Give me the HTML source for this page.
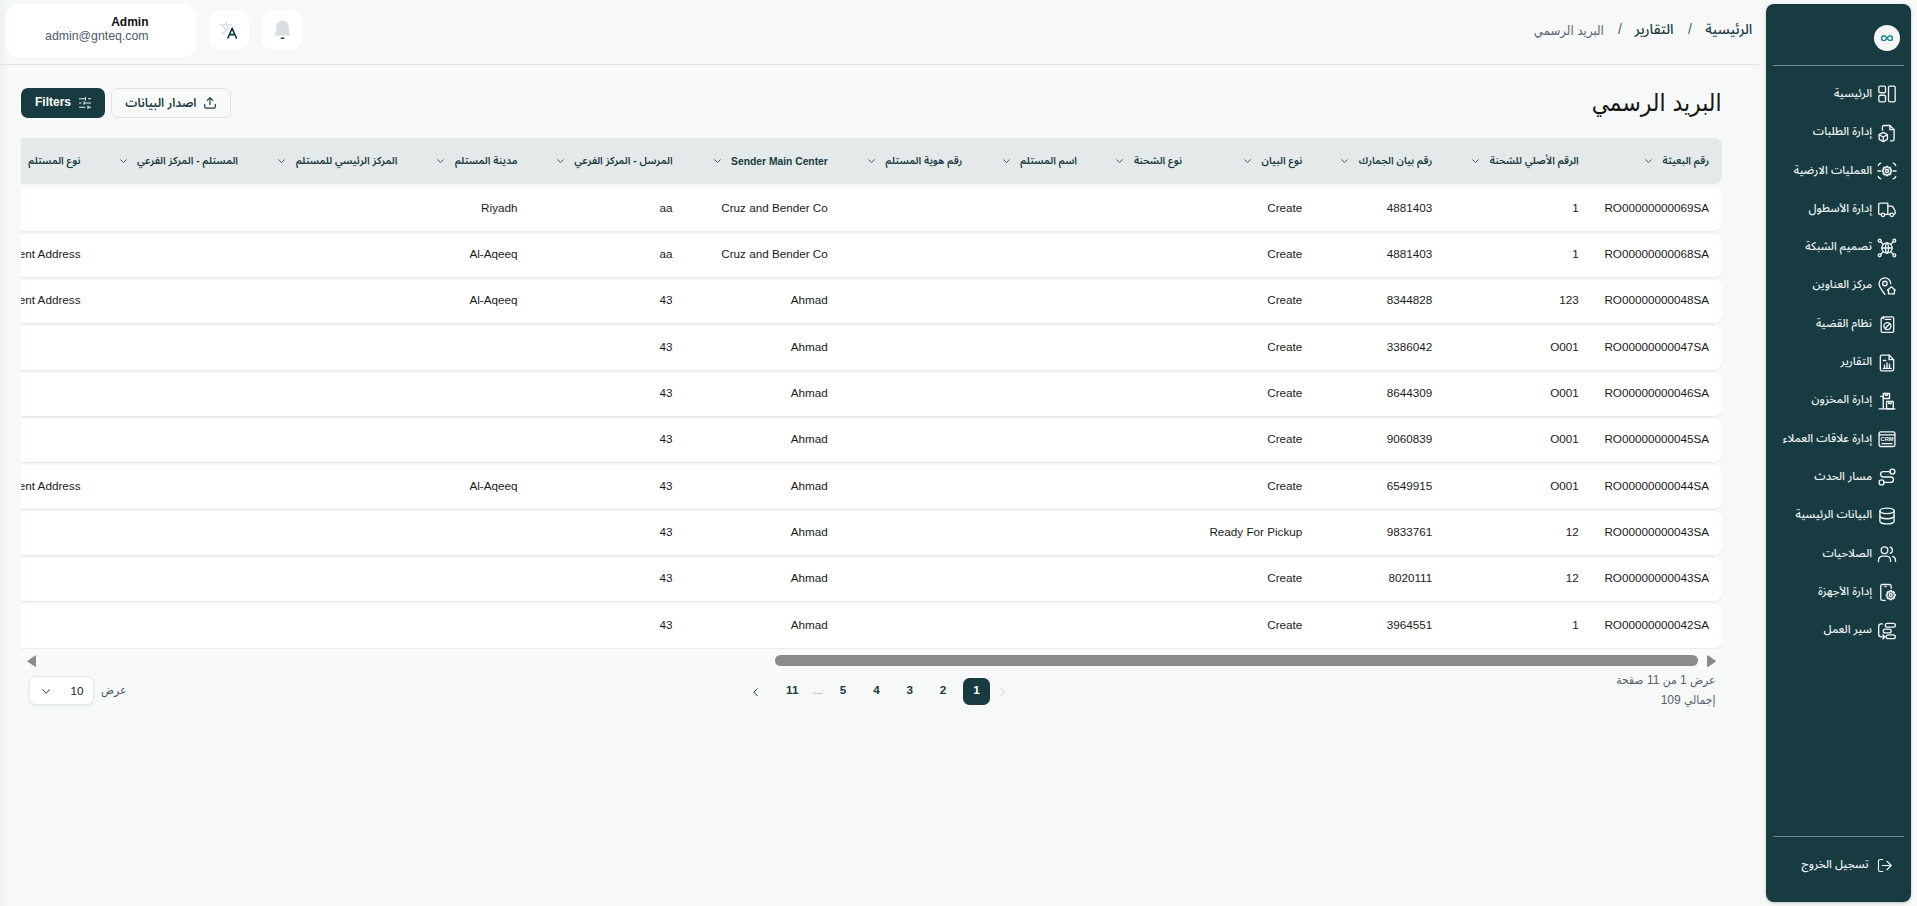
<!DOCTYPE html>
<html lang="ar" dir="rtl">
<head>
<meta charset="utf-8">
<title>البريد الرسمي</title>
<style>
*{box-sizing:border-box;margin:0;padding:0}
html,body{width:1917px;height:906px;overflow:hidden;background:#f7f9f9}
body{font-family:"Liberation Sans","Noto Sans Arabic","DejaVu Sans",sans-serif;font-size:12px;color:#1c1c1c;direction:rtl}
#app{position:relative;width:1917px;height:906px;overflow:hidden;background:#f7f9f9}
.edge{position:absolute;left:0;top:0;width:10px;height:906px;background:linear-gradient(to right,#eff2f2,#f7f9f9)}
/* sidebar */
.sb{position:absolute;left:1766px;top:4px;width:145px;height:898px;background:#173b40;border-radius:8px;box-shadow:0 1px 3px rgba(0,0,0,.25)}
.logo{position:absolute;left:108px;top:21px;width:26px;height:26px;border-radius:50%;background:#f5f5f5}
.logo svg{position:absolute;left:7px;top:9.8px;width:12px;height:6.4px}
.sb hr{position:absolute;left:7px;width:131px;height:1px;border:0;background:#6d888b}
.it{position:absolute;right:13.8px;height:38.3px;display:flex;align-items:center;flex-direction:row;direction:rtl;color:#eef3f3;font-weight:500;font-size:11.3px;white-space:nowrap}
.it svg{width:20px;height:20px;flex:none;margin-left:5.2px;display:block}
.it span{display:block;position:relative;top:-1.5px}
.it.lo{right:18.3px}
.it.lo svg{width:17px;height:17px;margin-left:7px}
/* header */
.hline{position:absolute;left:0;top:64px;width:1759px;height:1px;background:#dde3e5}
.user{position:absolute;left:5px;top:4px;width:191px;height:53px;background:#fff;border-radius:13px;direction:ltr}
.user b{position:absolute;right:47.5px;top:11px;font-size:12px;line-height:14px;font-weight:700;color:#111}
.user i{position:absolute;right:47.5px;top:25px;font-size:12.3px;line-height:14px;font-style:normal;color:#4c5c66}
.sq{position:absolute;top:10px;width:40px;height:40px;background:#fff;border-radius:11px}
.sq svg{position:absolute}
.bc{position:absolute;top:17px;height:24px;line-height:24px;font-size:14px;white-space:nowrap;color:#173b40;font-weight:500;text-align:right}
.bc.sep{font-weight:400;color:#4c5c66;font-family:"Liberation Sans",sans-serif}
.bc.cur{font-weight:400;color:#5b6870;font-family:"DejaVu Sans","Noto Sans Arabic",sans-serif;font-stretch:condensed;font-size:13.1px;top:18.5px}
h1{position:absolute;right:195.5px;top:83px;height:40px;line-height:40px;font-size:24.3px;font-weight:400;color:#141414;white-space:nowrap;font-family:"DejaVu Sans","Noto Sans Arabic",sans-serif;font-stretch:condensed}
/* toolbar */
.btn{position:absolute;top:88px;height:30px;border-radius:7px;display:flex;align-items:center;white-space:nowrap;font-size:12px;font-weight:700}
.btn.f{left:21px;width:84px;background:#173b40;color:#fff;direction:ltr}
.btn.e{left:111px;width:120px;border:1px solid #dfe5e7;background:#f8fafa;color:#173b40;font-weight:600}
/* table */
.tw{position:absolute;left:21px;top:130px;width:1701px;height:525px;overflow:hidden}
.th{position:absolute;left:-20px;right:0;top:8px;height:46px;background:#e4e9ea;border-radius:8px}
.tr{position:absolute;left:-20px;right:0;height:43.6px;background:#fff;border-radius:8px;box-shadow:0 1px 2px rgba(40,60,70,.09)}
.c{position:absolute;top:0;height:100%;display:flex;align-items:center;white-space:nowrap;direction:rtl}
.th .c{font-weight:600;font-size:10.3px;color:#173b40}
.th .c svg{width:7px;height:4.4px;margin-right:10.5px;flex:none;display:block;position:relative;top:.5px}
.th .c span{position:relative;top:0}
.tr .c{font-size:11.7px;color:#1a1a1a}
.tr .c span{direction:ltr;unicode-bidi:isolate;position:relative;top:-1.8px}
/* scrollbar */
.sbar{position:absolute;left:21px;top:648.5px;width:1701px;height:21px;background:#fafafa}
.sbar .thumb{position:absolute;left:754px;top:6.7px;width:923px;height:10.6px;border-radius:6px;background:#8b8b8b}
.sbar svg{position:absolute;top:6px;width:9.4px;height:12.4px}
/* pagination */
.pg{position:absolute;top:678px;height:27px;line-height:23.5px;text-align:center;font-size:11.7px;font-weight:700;color:#173b40;direction:ltr}
.pg.a{left:963px;width:27px;background:#173b40;color:#fff;border-radius:6.5px}
.info{position:absolute;right:201.5px;font-size:12px;line-height:20px;color:#56626b;font-family:"Liberation Sans","DejaVu Sans","Noto Sans Arabic",sans-serif;font-stretch:condensed;white-space:nowrap}
.sel{position:absolute;left:28.7px;top:676.3px;width:65.5px;height:29.2px;background:#fff;border:1px solid #e3e9eb;border-radius:7px;box-shadow:0 1px 2px rgba(40,60,70,.08);direction:ltr}
.sel b{position:absolute;left:40.8px;top:0;line-height:28px;font-weight:400;font-size:11.7px;color:#1a1a1a}
.sel svg{position:absolute;left:12px;top:11.5px;width:8.4px;height:5.4px}
.lbl{position:absolute;left:101px;top:680px;line-height:20px;font-size:12px;color:#4c5c66;font-family:"Liberation Sans","DejaVu Sans","Noto Sans Arabic",sans-serif;font-stretch:condensed}
</style>
</head>
<body>
<div id="app">
<div class="edge"></div>
<div class="hline"></div>
<div class="user"><b>Admin</b><i>admin@gnteq.com</i></div>
<div class="sq" style="left:209px"><svg style="left:9.500px;top:10.500px;width:15px;height:14px" viewBox="0 0 15 14" fill="none" stroke="#d5dcde" stroke-width="1.3" stroke-linecap="round"><path d="M.8 3.800h12M6.800 1v2.800M3.800 3.800c.8 3 3.200 5.200 5.400 5.800M9.800 3.800C9 7.500 6 11 2.800 12.800"/></svg><svg style="left:17.500px;top:17px;width:10.300px;height:12px" viewBox="0 0 11 12" preserveAspectRatio="none" fill="none" stroke="#14393d" stroke-width="1.700" stroke-linecap="round" stroke-linejoin="round"><path d="M1 11L5.500 1.300 10 11M2.600 7.600h5.800"/></svg></div>
<div class="sq" style="left:262px"><svg style="left:11.700px;top:9.800px;width:17px;height:20px" viewBox="0 0 17 20"><path d="M.4 15.500h16.200c-1.200-1.600-1.800-3.600-1.800-6V6.800A6.300 6.300 0 0 0 2.200 6.800v2.700c0 2.400-.6 4.400-1.800 6z" fill="#d8dfe1"/><path d="M7.300 18.200h2.400" stroke="#14393d" stroke-width="1.600" stroke-linecap="round"/></svg></div>
<div class="bc" style="right:164.800px">الرئيسية</div>
<div class="bc sep" style="right:225px">/</div>
<div class="bc" style="right:243.500px">التقارير</div>
<div class="bc sep" style="right:295px">/</div>
<div class="bc cur" style="right:313.200px">البريد الرسمي</div>
<h1>البريد الرسمي</h1>
<div class="btn f"><span style="position:absolute;left:14px;top:7px;line-height:14px">Filters</span><svg style="position:absolute;left:57.500px;top:9px;width:12px;height:12px" viewBox="0 0 12 12" fill="none" stroke="#e9eeee" stroke-width="1.100" stroke-linecap="butt"><path d="M0 1.800h6.500M9 1.800h3M0 6h2.500M5 6h7M0 10.200h6.500M9 10.200h3M6.500 0v3.600M5 4.200v3.600M9 8.400V12"/></svg></div>
<div class="btn e"><svg style="position:absolute;right:14.500px;top:8px;width:12px;height:12px" viewBox="0 0 12 12" fill="none" stroke="#173b40" stroke-width="1.150" stroke-linecap="round" stroke-linejoin="round"><path d="M6 7.500V.8M3.300 3.300L6 .7l2.700 2.600M.7 7.300v2.500a1.300 1.300 0 0 0 1.300 1.300h8a1.300 1.300 0 0 0 1.300-1.300V7.300"/></svg><span style="position:absolute;right:33.500px;top:5px;line-height:18px">اصدار البيانات</span></div>
<div class="tw">
<div class="th">
<div class="c" style="right:13px"><span>رقم البعيثة</span><svg viewBox="0 0 8 5" fill="none" stroke="#3c5358" stroke-width="1.1" stroke-linecap="round" stroke-linejoin="round"><path d="M.7.8L4 4.100 7.300.8"/></svg></div>
<div class="c" style="right:143.2px"><span>الرقم الأصلي للشحنة</span><svg viewBox="0 0 8 5" fill="none" stroke="#3c5358" stroke-width="1.1" stroke-linecap="round" stroke-linejoin="round"><path d="M.7.8L4 4.100 7.300.8"/></svg></div>
<div class="c" style="right:289.8px"><span>رقم بيان الجمارك</span><svg viewBox="0 0 8 5" fill="none" stroke="#3c5358" stroke-width="1.1" stroke-linecap="round" stroke-linejoin="round"><path d="M.7.8L4 4.100 7.300.8"/></svg></div>
<div class="c" style="right:419.7px"><span>نوع البيان</span><svg viewBox="0 0 8 5" fill="none" stroke="#3c5358" stroke-width="1.1" stroke-linecap="round" stroke-linejoin="round"><path d="M.7.8L4 4.100 7.300.8"/></svg></div>
<div class="c" style="right:540px"><span>نوع الشحنة</span><svg viewBox="0 0 8 5" fill="none" stroke="#3c5358" stroke-width="1.1" stroke-linecap="round" stroke-linejoin="round"><path d="M.7.8L4 4.100 7.300.8"/></svg></div>
<div class="c" style="right:645px"><span>اسم المستلم</span><svg viewBox="0 0 8 5" fill="none" stroke="#3c5358" stroke-width="1.1" stroke-linecap="round" stroke-linejoin="round"><path d="M.7.8L4 4.100 7.300.8"/></svg></div>
<div class="c" style="right:759.6px"><span>رقم هوية المستلم</span><svg viewBox="0 0 8 5" fill="none" stroke="#3c5358" stroke-width="1.1" stroke-linecap="round" stroke-linejoin="round"><path d="M.7.8L4 4.100 7.300.8"/></svg></div>
<div class="c" style="right:894.2px"><span>Sender Main Center</span><svg viewBox="0 0 8 5" fill="none" stroke="#3c5358" stroke-width="1.1" stroke-linecap="round" stroke-linejoin="round"><path d="M.7.8L4 4.100 7.300.8"/></svg></div>
<div class="c" style="right:1049.4px"><span>المرسل - المركز الفرعي</span><svg viewBox="0 0 8 5" fill="none" stroke="#3c5358" stroke-width="1.1" stroke-linecap="round" stroke-linejoin="round"><path d="M.7.8L4 4.100 7.300.8"/></svg></div>
<div class="c" style="right:1204.5px"><span>مدينة المستلم</span><svg viewBox="0 0 8 5" fill="none" stroke="#3c5358" stroke-width="1.1" stroke-linecap="round" stroke-linejoin="round"><path d="M.7.8L4 4.100 7.300.8"/></svg></div>
<div class="c" style="right:1324.7px"><span>المركز الرئيسي للمستلم</span><svg viewBox="0 0 8 5" fill="none" stroke="#3c5358" stroke-width="1.1" stroke-linecap="round" stroke-linejoin="round"><path d="M.7.8L4 4.100 7.300.8"/></svg></div>
<div class="c" style="right:1484px"><span>المستلم - المركز الفرعي</span><svg viewBox="0 0 8 5" fill="none" stroke="#3c5358" stroke-width="1.1" stroke-linecap="round" stroke-linejoin="round"><path d="M.7.8L4 4.100 7.300.8"/></svg></div>
<div class="c" style="right:1641.5px"><span>نوع المستلم</span></div>
</div>
<div class="tr" style="top:57.30px">
<div class="c" style="right:13px"><span>RO00000000069SA</span></div>
<div class="c" style="right:143.2px"><span>1</span></div>
<div class="c" style="right:289.8px"><span>4881403</span></div>
<div class="c" style="right:419.7px"><span>Create</span></div>
<div class="c" style="right:894.2px"><span>Cruz and Bender Co</span></div>
<div class="c" style="right:1049.4px"><span>aa</span></div>
<div class="c" style="right:1204.5px"><span>Riyadh</span></div>
</div>
<div class="tr" style="top:103.60px">
<div class="c" style="right:13px"><span>RO00000000068SA</span></div>
<div class="c" style="right:143.2px"><span>1</span></div>
<div class="c" style="right:289.8px"><span>4881403</span></div>
<div class="c" style="right:419.7px"><span>Create</span></div>
<div class="c" style="right:894.2px"><span>Cruz and Bender Co</span></div>
<div class="c" style="right:1049.4px"><span>aa</span></div>
<div class="c" style="right:1204.5px"><span>Al-Aqeeq</span></div>
<div class="c" style="right:1641.5px"><span>Recipient Address</span></div>
</div>
<div class="tr" style="top:149.90px">
<div class="c" style="right:13px"><span>RO00000000048SA</span></div>
<div class="c" style="right:143.2px"><span>123</span></div>
<div class="c" style="right:289.8px"><span>8344828</span></div>
<div class="c" style="right:419.7px"><span>Create</span></div>
<div class="c" style="right:894.2px"><span>Ahmad</span></div>
<div class="c" style="right:1049.4px"><span>43</span></div>
<div class="c" style="right:1204.5px"><span>Al-Aqeeq</span></div>
<div class="c" style="right:1641.5px"><span>Recipient Address</span></div>
</div>
<div class="tr" style="top:196.20px">
<div class="c" style="right:13px"><span>RO00000000047SA</span></div>
<div class="c" style="right:143.2px"><span>O001</span></div>
<div class="c" style="right:289.8px"><span>3386042</span></div>
<div class="c" style="right:419.7px"><span>Create</span></div>
<div class="c" style="right:894.2px"><span>Ahmad</span></div>
<div class="c" style="right:1049.4px"><span>43</span></div>
</div>
<div class="tr" style="top:242.50px">
<div class="c" style="right:13px"><span>RO00000000046SA</span></div>
<div class="c" style="right:143.2px"><span>O001</span></div>
<div class="c" style="right:289.8px"><span>8644309</span></div>
<div class="c" style="right:419.7px"><span>Create</span></div>
<div class="c" style="right:894.2px"><span>Ahmad</span></div>
<div class="c" style="right:1049.4px"><span>43</span></div>
</div>
<div class="tr" style="top:288.80px">
<div class="c" style="right:13px"><span>RO00000000045SA</span></div>
<div class="c" style="right:143.2px"><span>O001</span></div>
<div class="c" style="right:289.8px"><span>9060839</span></div>
<div class="c" style="right:419.7px"><span>Create</span></div>
<div class="c" style="right:894.2px"><span>Ahmad</span></div>
<div class="c" style="right:1049.4px"><span>43</span></div>
</div>
<div class="tr" style="top:335.10px">
<div class="c" style="right:13px"><span>RO00000000044SA</span></div>
<div class="c" style="right:143.2px"><span>O001</span></div>
<div class="c" style="right:289.8px"><span>6549915</span></div>
<div class="c" style="right:419.7px"><span>Create</span></div>
<div class="c" style="right:894.2px"><span>Ahmad</span></div>
<div class="c" style="right:1049.4px"><span>43</span></div>
<div class="c" style="right:1204.5px"><span>Al-Aqeeq</span></div>
<div class="c" style="right:1641.5px"><span>Recipient Address</span></div>
</div>
<div class="tr" style="top:381.40px">
<div class="c" style="right:13px"><span>RO00000000043SA</span></div>
<div class="c" style="right:143.2px"><span>12</span></div>
<div class="c" style="right:289.8px"><span>9833761</span></div>
<div class="c" style="right:419.7px"><span>Ready For Pickup</span></div>
<div class="c" style="right:894.2px"><span>Ahmad</span></div>
<div class="c" style="right:1049.4px"><span>43</span></div>
</div>
<div class="tr" style="top:427.70px">
<div class="c" style="right:13px"><span>RO00000000043SA</span></div>
<div class="c" style="right:143.2px"><span>12</span></div>
<div class="c" style="right:289.8px"><span>8020111</span></div>
<div class="c" style="right:419.7px"><span>Create</span></div>
<div class="c" style="right:894.2px"><span>Ahmad</span></div>
<div class="c" style="right:1049.4px"><span>43</span></div>
</div>
<div class="tr" style="top:474.00px">
<div class="c" style="right:13px"><span>RO00000000042SA</span></div>
<div class="c" style="right:143.2px"><span>1</span></div>
<div class="c" style="right:289.8px"><span>3964551</span></div>
<div class="c" style="right:419.7px"><span>Create</span></div>
<div class="c" style="right:894.2px"><span>Ahmad</span></div>
<div class="c" style="right:1049.4px"><span>43</span></div>
</div>
</div>
<div class="sbar"><div class="thumb"></div><svg style="left:5.500px" viewBox="0 0 10 13"><path d="M0 6.500L8.600.5Q10 0 10 1.500v10Q10 13 8.600 12.500z" fill="#8b8b8b"/></svg><svg style="left:1685.500px" viewBox="0 0 10 13"><path d="M10 6.500L1.400.5Q0 0 0 1.500v10Q0 13 1.400 12.500z" fill="#8b8b8b"/></svg></div>
<div class="pg a">1</div>
<div class="pg" style="left:929.5px;width:27px">2</div>
<div class="pg" style="left:896.2px;width:27px">3</div>
<div class="pg" style="left:863.1px;width:27px">4</div>
<div class="pg" style="left:829.5px;width:27px">5</div>
<div class="pg" style="left:778.8px;width:27px">11</div>
<div class="pg" style="left:807.6px;width:20px;font-weight:400;color:#7a8790">...</div>
<svg style="position:absolute;left:753.3px;top:687.5px;width:5px;height:8.4px" viewBox="0 0 6 10" fill="none" stroke="#173b40" stroke-width="1.2" stroke-linecap="round" stroke-linejoin="round"><path d="M5 .8L1 5l4 4.200"/></svg>
<svg style="position:absolute;left:1000.2px;top:687.5px;width:5px;height:8.4px" viewBox="0 0 6 10" fill="none" stroke="#c3ccd0" stroke-width="1.1" stroke-linecap="round" stroke-linejoin="round"><path d="M1 .8L5 5 1 9.200"/></svg>
<div class="info" style="top:670px">عرض 1 من 11 صفحة</div>
<div class="info" style="top:690px">إجمالي 109</div>
<div class="sel"><b>10</b><svg viewBox="0 0 9 6" fill="none" stroke="#333" stroke-width="1.100" stroke-linecap="round" stroke-linejoin="round"><path d="M.8.800L4.500 4.800 8.200.8"/></svg></div>
<div class="lbl">عرض</div>
<aside class="sb">
<div class="logo"><svg viewBox="0 0 12 6.400" fill="none" stroke="#16868c" stroke-width="1.400"><path d="M6 3.200C5 1.700 4.200.8 3 .8a2.400 2.400 0 0 0 0 4.800c1.200 0 2-.9 3-2.400zm0 0C7 1.700 7.800.8 9 .8a2.400 2.400 0 0 1 0 4.800c-1.200 0-2-.9-3-2.400z"/></svg></div>
<hr style="top:61px">
<div class="it" style="top:71.35px"><svg viewBox="0 0 24 24" fill="none" stroke="#f2f6f6" stroke-width="1.6" stroke-linecap="round" stroke-linejoin="round"><rect x="2.2" y="2.5" width="8" height="8" rx="1.6"/><rect x="2.2" y="13.5" width="8" height="8" rx="1.6"/><rect x="13.8" y="2.5" width="8" height="19" rx="1.6"/></svg><span>الرئيسية</span></div>
<div class="it" style="top:109.65px"><svg viewBox="0 0 24 24" fill="none" stroke="#f2f6f6" stroke-width="1.6" stroke-linecap="round" stroke-linejoin="round"><path d="M6.5 8.5V5a2 2 0 0 1 2-2h7l5 5v11.500a2 2 0 0 1-2 2h-2.500"/><path d="M15.500 3v5h5"/><path d="M7.500 11.200l5 2.800v5.600l-5 2.800-5-2.800v-5.600z"/><path d="M2.700 14.100l4.800 2.700 4.800-2.700M7.500 16.800v5.400"/></svg><span>إدارة الطلبات</span></div>
<div class="it" style="top:147.95px"><svg viewBox="0 0 24 24" fill="none" stroke="#f2f6f6" stroke-width="1.6" stroke-linecap="round" stroke-linejoin="round"><circle cx="12" cy="12" r="1.800"/><path d="M16.05 10.89L17.52 11.04L17.52 12.96L16.05 13.11L15.65 14.08L16.58 15.22L15.22 16.58L14.08 15.65L13.11 16.05L12.96 17.52L11.04 17.52L10.89 16.05L9.92 15.65L8.78 16.58L7.42 15.22L8.35 14.08L7.95 13.11L6.48 12.96L6.48 11.04L7.95 10.89L8.35 9.92L7.42 8.78L8.78 7.42L9.92 8.35L10.89 7.95L11.04 6.48L12.96 6.48L13.11 7.95L14.08 8.35L15.22 7.42L16.58 8.78L15.65 9.92z"/><path d="M1.500 5.500C2 4 3 3 4.500 2.500M22.500 5.500C22 4 21 3 19.500 2.500M1.500 18.500C2 20 3 21 4.500 21.500M22.500 18.500c-.5 1.500-1.500 2.500-3 3M1 12h3.200M19.800 12H23"/></svg><span>العمليات الارضية</span></div>
<div class="it" style="top:186.25px"><svg viewBox="0 0 24 24" fill="none" stroke="#f2f6f6" stroke-width="1.6" stroke-linecap="round" stroke-linejoin="round"><path d="M5 18.500H3.500a1.500 1.500 0 0 1-1.500-1.500V6.500A1.500 1.500 0 0 1 3.500 5H13v13.500H9.500"/><path d="M13 8.500h4.200a2 2 0 0 1 1.700 1l2.600 4.300a2 2 0 0 1 .3 1V17a1.500 1.500 0 0 1-1.500 1.500H20M15.500 18.500H13"/><circle cx="7.200" cy="19" r="2.100"/><circle cx="17.800" cy="19" r="2.100"/></svg><span>إدارة الأسطول</span></div>
<div class="it" style="top:224.55px"><svg viewBox="0 0 24 24" fill="none" stroke="#f2f6f6" stroke-width="1.6" stroke-linecap="round" stroke-linejoin="round"><circle cx="12" cy="12" r="6.200"/><path d="M5.800 12h12.400M12 5.800c-2.600 2-2.600 10.400 0 12.400M12 5.800c2.600 2 2.600 10.400 0 12.400"/><circle cx="3.200" cy="3.200" r="1.700"/><circle cx="20.800" cy="3.200" r="1.700"/><circle cx="3.200" cy="20.800" r="1.700"/><circle cx="20.800" cy="20.800" r="1.700"/><path d="M4.500 4.500l3 3M19.500 4.500l-3 3M4.500 19.500l3-3M19.500 19.500l-3-3"/></svg><span>تصميم الشبكة</span></div>
<div class="it" style="top:262.85px"><svg viewBox="0 0 24 24" fill="none" stroke="#f2f6f6" stroke-width="1.6" stroke-linecap="round" stroke-linejoin="round"><circle cx="9.500" cy="9" r="2.700"/><path d="M9.500 22C6 17.500 2.500 13.500 2.500 9.300a7 7 0 0 1 14-.3"/><path d="M12.500 17.200l4.800-4.200 4.700 4.200M13.800 16.200v5.300h7v-5.300"/></svg><span>مركز العناوين</span></div>
<div class="it" style="top:301.15px"><svg viewBox="0 0 24 24" fill="none" stroke="#f2f6f6" stroke-width="1.6" stroke-linecap="round" stroke-linejoin="round"><path d="M8 4.500H6.500A1.500 1.500 0 0 0 5 6v14.500A1.500 1.500 0 0 0 6.500 22h12a1.500 1.500 0 0 0 1.500-1.500V5a1.500 1.500 0 0 0-1.500-1.500H9.500L7.500 5.500"/><path d="M10 6.500h6.500"/><circle cx="12.500" cy="14.500" r="4.200"/><path d="M9.700 17.300l5.600-5.600"/><path d="M7.500 2.800v1.500"/></svg><span>نظام القضية</span></div>
<div class="it" style="top:339.45px"><svg viewBox="0 0 24 24" fill="none" stroke="#f2f6f6" stroke-width="1.6" stroke-linecap="round" stroke-linejoin="round"><path d="M14.500 2.500H6a2 2 0 0 0-2 2v15a2 2 0 0 0 2 2h12a2 2 0 0 0 2-2V8z"/><path d="M14.500 2.500V8H20"/><path d="M7.500 18.500h9.500M9 18v-3.500M12 18v-6M15 18v-4.500M7.500 9h3"/></svg><span>التقارير</span></div>
<div class="it" style="top:377.75px"><svg viewBox="0 0 24 24" fill="none" stroke="#f2f6f6" stroke-width="1.6" stroke-linecap="round" stroke-linejoin="round"><path d="M2.500 21.500h19M7.500 21.500V6.500"/><path d="M7.500 3h7.500v6H7.500z"/><path d="M10 3v2.200h2.500V3"/><path d="M11.500 12.500h8v9h-8z"/><path d="M14 12.500v2.500h3v-2.500"/><path d="M4.500 6.500h3"/></svg><span>إدارة المخزون</span></div>
<div class="it" style="top:416.05px"><svg viewBox="0 0 24 24" fill="none" stroke="#f2f6f6" stroke-width="1.6" stroke-linecap="round" stroke-linejoin="round"><rect x="2.500" y="3.500" width="19" height="17.500" rx="1.800"/><path d="M2.500 7h19M6 17.500h12"/><text x="12" y="14.600" text-anchor="middle" font-family="Liberation Sans, sans-serif" font-weight="700" font-size="6.800" fill="#f2f6f6" stroke="none" direction="ltr">CRM</text></svg><span>إدارة علاقات العملاء</span></div>
<div class="it" style="top:454.35px"><svg viewBox="0 0 24 24" fill="none" stroke="#f2f6f6" stroke-width="1.6" stroke-linecap="round" stroke-linejoin="round"><circle cx="18.500" cy="5.500" r="3"/><circle cx="5.500" cy="18.500" r="3"/><path d="M15.500 5.500H7.500a3.250 3.250 0 0 0 0 6.500h9a3.250 3.250 0 0 1 0 6.500H8.500"/></svg><span>مسار الحدث</span></div>
<div class="it" style="top:492.65px"><svg viewBox="0 0 24 24" fill="none" stroke="#f2f6f6" stroke-width="1.6" stroke-linecap="round" stroke-linejoin="round"><ellipse cx="12" cy="5.800" rx="8.500" ry="3.300"/><path d="M3.500 5.800v12.400c0 1.800 3.800 3.300 8.500 3.300s8.500-1.500 8.500-3.300V5.800"/><path d="M3.500 12c0 1.800 3.800 3.300 8.500 3.300s8.500-1.500 8.500-3.300"/></svg><span>البيانات الرئيسية</span></div>
<div class="it" style="top:530.95px"><svg viewBox="0 0 24 24" fill="none" stroke="#f2f6f6" stroke-width="1.6" stroke-linecap="round" stroke-linejoin="round"><circle cx="9" cy="7.500" r="4"/><path d="M1.800 21v-1.500a5 5 0 0 1 5-5h4.400a5 5 0 0 1 5 5V21"/><path d="M15.800 3.700a4 4 0 0 1 0 7.600M22.200 21v-1.500a5 5 0 0 0-3.400-4.700"/></svg><span>الصلاحيات</span></div>
<div class="it" style="top:569.25px"><svg viewBox="0 0 24 24" fill="none" stroke="#f2f6f6" stroke-width="1.6" stroke-linecap="round" stroke-linejoin="round"><path d="M17 7.500V5a2 2 0 0 0-2-2H6.500a2 2 0 0 0-2 2v15a2 2 0 0 0 2 2H10"/><path d="M9.500 5.500h1.500"/><circle cx="16.500" cy="15.800" r="1.700"/><path d="M20.36 14.74L21.82 14.87L21.82 16.73L20.36 16.86L19.97 17.78L20.92 18.91L19.61 20.22L18.48 19.27L17.56 19.66L17.43 21.12L15.57 21.12L15.44 19.66L14.52 19.27L13.39 20.22L12.08 18.91L13.03 17.78L12.64 16.86L11.18 16.73L11.18 14.87L12.64 14.74L13.03 13.82L12.08 12.69L13.39 11.38L14.52 12.33L15.44 11.94L15.57 10.48L17.43 10.48L17.56 11.94L18.48 12.33L19.61 11.38L20.92 12.69L19.97 13.82z"/></svg><span>إدارة الأجهزة</span></div>
<div class="it" style="top:607.55px"><svg viewBox="0 0 24 24" fill="none" stroke="#f2f6f6" stroke-width="1.6" stroke-linecap="round" stroke-linejoin="round"><rect x="10" y="2.800" width="12" height="4.600" rx="2.300"/><rect x="7.500" y="9.700" width="9.500" height="4.600" rx="2.300"/><rect x="11" y="16.600" width="11" height="4.600" rx="2.300"/><path d="M6.500 3.500H5a3 3 0 0 0-3 3v9.500a3 3 0 0 0 3 3h4M7 16.500l2.500 2.500L7 21.500"/></svg><span>سير العمل</span></div>
<div class="it lo" style="top:842.2px"><svg viewBox="0 0 24 24" fill="none" stroke="#f2f6f6" stroke-width="1.6" stroke-linecap="round" stroke-linejoin="round"><path d="M9.500 3.500H5.500a2 2 0 0 0-2 2v13a2 2 0 0 0 2 2h4"/><path d="M9 12h12M15.500 6l6 6-6 6"/></svg><span>تسجيل الخروج</span></div>
<hr style="top:832px">
</aside>
</div>
</body>
</html>
